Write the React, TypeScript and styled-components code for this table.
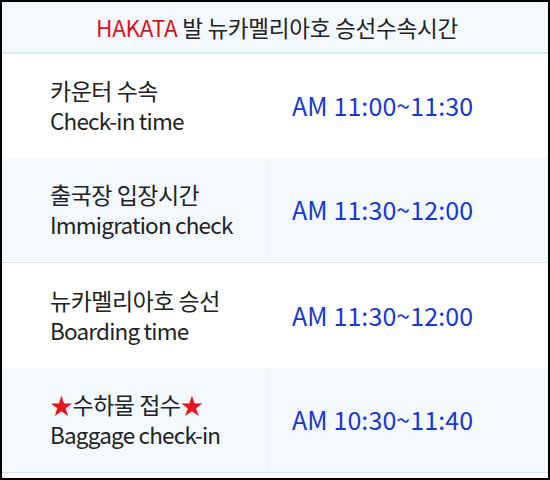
import styled, { createGlobalStyle } from "styled-components";

const GlobalStyle = createGlobalStyle`
  html, body {
    margin: 0;
    padding: 0;
    background: #ffffff;
  }
  body {
    font-family: "Noto Sans CJK KR", "Noto Sans", sans-serif;
  }
`;

const Frame = styled.div`
  width: 550px;
  height: 480px;
  box-sizing: border-box;
  border: 2px solid #000000;
  background: #ffffff;
  display: flex;
  flex-direction: column;
`;

const Header = styled.div`
  height: 50px;
  flex-shrink: 0;
  display: flex;
  align-items: center;
  justify-content: center;
  background: #f4f9fd;
  border-bottom: 2px solid #d3e5ef;
  font-size: 22.6px;
  letter-spacing: -0.3px;
  color: #222222;
  padding-left: 4px;
`;

const Red = styled.span`
  color: #d7141b;
`;

const Row = styled.div<{ $tint: boolean; $h: number }>`
  height: ${(p) => p.$h}px;
  box-sizing: border-box;
  flex-shrink: 0;
  display: grid;
  grid-template-columns: 266px 1fr;
  background: ${(p) => (p.$tint ? "#f4f9fe" : "#ffffff")};
  border-bottom: ${(p) => (p.$tint ? "1px dotted #b9d3e6" : "none")};
`;

const LabelCell = styled.div<{ $tint: boolean }>`
  display: flex;
  flex-direction: column;
  justify-content: center;
  gap: 2px;
  padding-left: 48px;
  padding-bottom: 2px;
  border-right: 1px solid ${(p) => (p.$tint ? "#eef4f9" : "#ffffff")};
  color: #222222;
`;

const Korean = styled.div`
  font-size: 23px;
  line-height: 28px;
  letter-spacing: -0.5px;
`;

const English = styled.div`
  font-size: 22.5px;
  line-height: 28px;
  letter-spacing: -0.8px;
`;

const Star = styled.span`
  color: #e8141b;
`;

const TimeCell = styled.div`
  display: flex;
  align-items: center;
  padding-left: 24px;
  padding-bottom: 2px;
  color: #1638d0;
  font-size: 25px;
  letter-spacing: 0.1px;
`;

const rows = [
  { ko: "카운터 수속", en: "Check-in time", time: "AM 11:00~11:30", h: 104 },
  { ko: "출국장 입장시간", en: "Immigration check", time: "AM 11:30~12:00", h: 105 },
  { ko: "뉴카멜리아호 승선", en: "Boarding time", time: "AM 11:30~12:00", h: 105 },
  { ko: "수하물 접수", en: "Baggage check-in", time: "AM 10:30~11:40", h: 105, star: true },
];

export default function App() {
  return (
    <>
      <GlobalStyle />
      <Frame>
        <Header>
          <Red>HAKATA</Red>&nbsp;발 뉴카멜리아호 승선수속시간
        </Header>
        {rows.map((r, i) => {
          const tint = i % 2 === 1;
          return (
            <Row key={r.en} $tint={tint} $h={r.h}>
              <LabelCell $tint={tint}>
                <Korean>
                  {r.star && <Star>★</Star>}
                  {r.ko}
                  {r.star && <Star>★</Star>}
                </Korean>
                <English>{r.en}</English>
              </LabelCell>
              <TimeCell>{r.time}</TimeCell>
            </Row>
          );
        })}
      </Frame>
    </>
  );
}
